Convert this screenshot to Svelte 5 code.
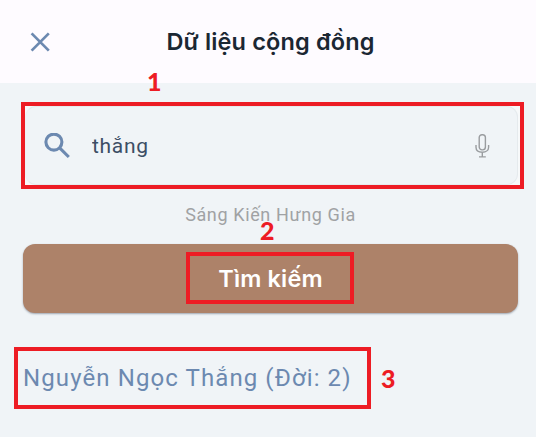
<script lang="ts">
	let query = $state('thắng');

	const results = [
		{ name: 'Nguyễn Ngọc Thắng', generation: 2 }
	];
</script>

<div class="screen">
	<header>
		<button class="close" aria-label="Đóng">
			<svg width="20" height="20" viewBox="0 0 20 20">
				<path d="M1.6 1.4 18.8 18.6M18.8 1.4 1.6 18.6" />
			</svg>
		</button>
		<h1>Dữ liệu cộng đồng</h1>
	</header>

	<main>
		<div class="search marked">
			<label class="field">
				<svg class="glass" width="26" height="26" viewBox="0 0 26 26">
					<circle cx="9.9" cy="9.1" r="8" />
					<path d="M15.6 14.8 24.8 24" />
				</svg>
				<input type="text" bind:value={query} aria-label="Tìm kiếm" />
				<svg class="mic" width="15" height="24" viewBox="0 0 15 24">
					<rect x="4.2" y="0.7" width="6.2" height="15.2" rx="2.8" />
					<path d="M1 11v2.2c0 3 2.4 5 6.3 5s6.3-2 6.3-5V11M7.3 18.2v4.6M4 22.9h6.8" />
				</svg>
			</label>
			<span class="step one">1</span>
		</div>

		<p class="group">Sáng Kiến Hưng Gia</p>

		<button class="submit">
			<span class="marked">Tìm kiếm</span>
			<span class="step two">2</span>
		</button>

		{#each results as person}
			<div class="result marked">
				<span class="name">{person.name} (Đời: {person.generation})</span>
				<span class="step three">3</span>
			</div>
		{/each}
	</main>
</div>

<style>
	:global(body) {
		margin: 0;
		background: #f0f4f7;
	}
	.screen {
		width: 536px;
		height: 437px;
		overflow: hidden;
		background: #f0f4f7;
		font-family: Roboto, "Noto Sans", sans-serif;
	}
	button {
		border: 0;
		padding: 0;
		font-family: Inter, "Noto Sans", sans-serif;
	}
	header {
		display: grid;
		grid-template-columns: 80px 1fr 75px;
		align-items: center;
		height: 83px;
		background: #fefbff;
	}
	.close {
		display: flex;
		justify-self: center;
		background: none;
	}
	.close path {
		stroke: #6c89b0;
		stroke-width: 2.7;
	}
	h1 {
		margin: 0;
		text-align: center;
		white-space: nowrap;
		font-family: Inter, "Noto Sans", sans-serif;
		font-size: 23.5px;
		font-weight: 600;
		line-height: 30px;
		letter-spacing: 0.15px;
		color: #1b2733;
	}
	main {
		display: flex;
		flex-direction: column;
		padding-top: 19px;
	}
	.marked {
		box-sizing: border-box;
		position: relative;
		border: 4px solid #ed1c24;
	}
	.search {
		width: 503px;
		height: 87px;
		margin-left: 21px;
		padding-right: 2px;
		background: #f7f9fa;
	}
	.field {
		box-sizing: border-box;
		display: flex;
		align-items: center;
		height: 100%;
		padding: 0 27px 0 18px;
		border: 1px solid #e5eaed;
		border-left-color: #edf1f4;
		border-radius: 11px;
		background: #f0f4f7;
	}
	svg {
		fill: none;
	}
	.glass {
		stroke: #6c89b0;
		stroke-width: 3.1;
	}
	input {
		flex: 1;
		min-width: 0;
		margin-left: 22px;
		padding: 1px 0 0;
		border: 0;
		outline: 0;
		background: none;
		font-family: inherit;
		font-size: 21px;
		letter-spacing: 0.7px;
		color: #3c4e65;
	}
	.mic {
		stroke: #999c9f;
		stroke-width: 1.4;
	}
	.group {
		margin: 16px 0 19px;
		padding-left: 5px;
		text-align: center;
		font-size: 18px;
		line-height: 20px;
		letter-spacing: 0.62px;
		color: #a0a2a4;
	}
	.submit {
		position: relative;
		display: flex;
		align-items: center;
		justify-content: center;
		width: 495px;
		height: 69px;
		margin-left: 23px;
		border-radius: 12px;
		background: #ad8269;
		box-shadow: 0 1px 2px rgba(60, 70, 90, 0.45);
		color: #fff;
		font-size: 23.5px;
		font-weight: 600;
	}
	.submit .marked {
		width: 168px;
		height: 52px;
		margin: 0 1px 1px 0;
		padding-left: 1px;
		line-height: 45px;
		letter-spacing: 0.15px;
	}
	.result {
		width: 357px;
		height: 62px;
		margin: 34px 0 0 14px;
		padding-left: 5px;
		line-height: 55px;
		font-size: 24px;
		letter-spacing: 1.1px;
		white-space: nowrap;
		color: #6c89b0;
	}
	/* step numbers sit over the screen next to their frames */
	.step {
		position: absolute;
		font-family: Lato, sans-serif;
		font-size: 25px;
		font-weight: 900;
		line-height: 18px;
		letter-spacing: 0;
		color: #ed1c24;
	}
	.one {
		left: 122px;
		top: -34px;
	}
	.two {
		left: 237px;
		top: -23px;
	}
	.three {
		left: 363px;
		top: 18px;
	}
</style>
